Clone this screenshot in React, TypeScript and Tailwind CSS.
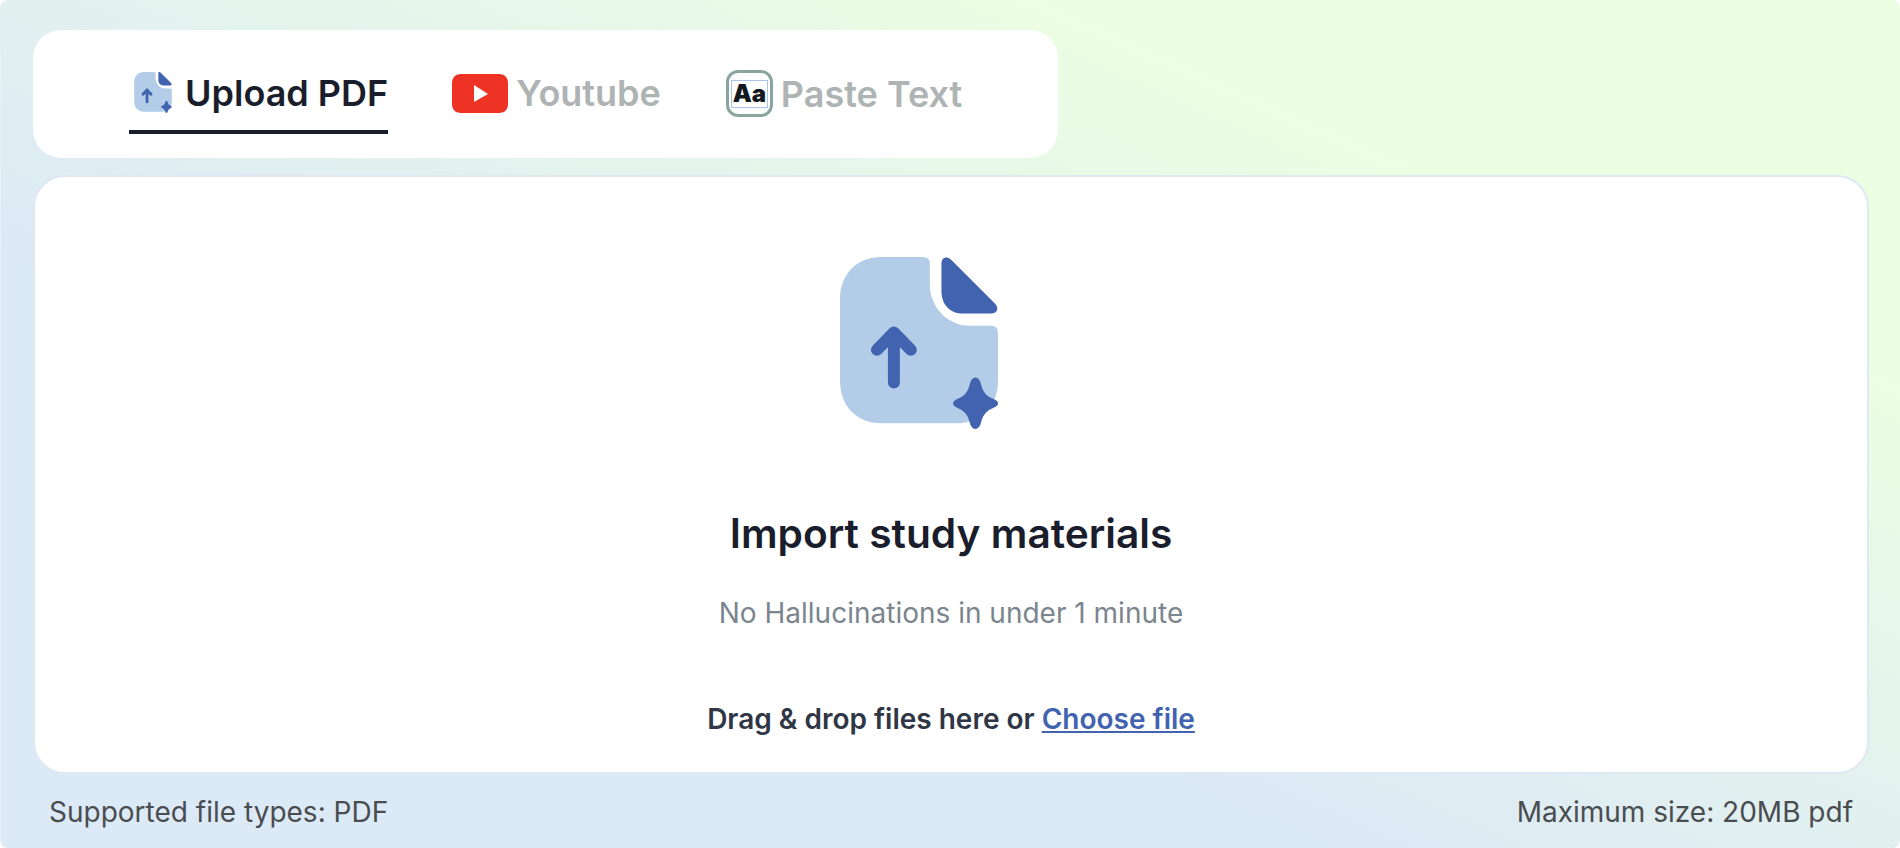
const FONT = "font-['Inter',sans-serif]";

function UploadIcon({ className }: { className: string }) {
  return (
    <svg className={className} viewBox="90 48 475 517" fill="none">
      <path
        d="M340 48 Q360 48 360 68 V130 C360 200 415 255 480 255 H545 Q565 255 565 275 V420 C565 500 510 548 440 548 H215 C140 548 90 495 90 420 V175 C90 100 140 48 215 48 Z"
        fill="#B3CDE8"
      />
      <path
        d="M395 68 C395 48 412 44 425 57 L555 187 C570 202 562 218 545 218 H460 C420 218 395 190 395 150 Z"
        fill="#4263B0"
      />
      <path d="M252 425 V275 M201 327 L252 275 L303 327" stroke="#4263B0" strokeWidth="36" strokeLinecap="round" strokeLinejoin="round" />
      <path
        d="M497 410 Q510 410 515 435 Q522 465 552 475 Q565 480 565 488 Q565 497 552 501 Q522 512 515 542 Q510 565 497 565 Q484 565 479 542 Q472 512 442 501 Q430 497 430 488 Q430 480 442 475 Q472 465 479 435 Q484 410 497 410 Z"
        fill="#4263B0"
      />
    </svg>
  );
}

function YoutubeIcon() {
  return (
    <svg className="h-[39px] w-[56px] shrink-0" viewBox="0 0 56 39">
      <path d="M9 0 H47 C53 0 56 4 56 9 V30 C56 35 53 39 47 39 H9 C3 39 0 35 0 30 V9 C0 4 3 0 9 0 Z" fill="#EE3324" />
      <path d="M22 11 L36 20 L22 28 Z" fill="#fff" />
    </svg>
  );
}

function PasteIcon() {
  return (
    <div className="flex h-[47px] w-[47px] shrink-0 items-center justify-center rounded-[12px] border-[3px] border-[#8AA5A0]">
      <div className="flex h-[28px] w-[37px] items-center justify-center border border-[#A9C6E8] text-[24px] leading-none font-black text-[#14181F]">
        Aa
      </div>
    </div>
  );
}

export default function App() {
  return (
    <div className={`${FONT} h-[848px] w-[1900px] overflow-hidden bg-white`}>
      <div className="flex h-full flex-col rounded-[8px] border-l border-l-[#E9F0F8] bg-gradient-to-tr from-[#DCE9F6] from-35% to-[#ECFEE2] to-[78%] pt-[30px] pr-[33px] pl-[32px]">
        <div className="flex h-[128px] w-[1025px] items-start gap-[64px] rounded-[28px] bg-white pt-[40px] pl-[96px]">
          <div className="flex h-[64px] items-start gap-[13px] border-b-4 border-[#1A1E2C] pl-[5px]">
            <UploadIcon className="mt-[2px] h-[41px] w-[38px] shrink-0" />
            <span className="text-[36px] leading-[46px] font-semibold text-[#1A1E2C]">Upload PDF</span>
          </div>
          <div className="flex items-center gap-[8px]">
            <YoutubeIcon />
            <span className="text-[36px] leading-[46px] font-semibold text-[#AEB3B3]">Youtube</span>
          </div>
          <div className="ml-[1px] flex items-center gap-[8px]">
            <PasteIcon />
            <span className="text-[36px] leading-[46px] font-semibold text-[#AEB3B3]">Paste Text</span>
          </div>
        </div>

        <div className="mt-[17px] flex h-[599px] w-[1836px] flex-col items-center rounded-[32px] border-2 border-[#DFE8F3] bg-white pt-[80px]">
          <UploadIcon className="mr-[64px] h-[172px] w-[158px]" />
          <h1 className="mt-[82px] text-[40.7px] leading-[46px] font-semibold text-[#1A1E2C]">Import study materials</h1>
          <p className="mt-[38px] text-[28px] leading-[36px] text-[#7A858E]">No Hallucinations in under 1 minute</p>
          <p className="mt-[70px] text-[28px] leading-[36px] font-semibold text-[#2F3645]">
            Drag &amp; drop files here or <span className="text-[#4263B0] underline">Choose file</span>
          </p>
        </div>

        <div className="mt-[20px] flex justify-between pr-[14px] pl-[16px] text-[28px] leading-[36px] text-[#4A4D50]">
          <span>Supported file types: PDF</span>
          <span>Maximum size: 20MB pdf</span>
        </div>
      </div>
    </div>
  );
}
